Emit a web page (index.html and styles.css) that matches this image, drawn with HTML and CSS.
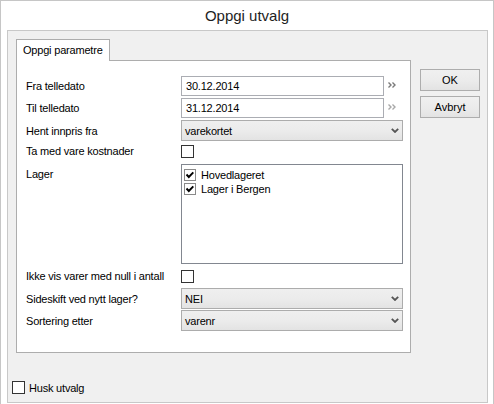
FILE: index.html
```html
<!DOCTYPE html>
<html lang="no">
<head>
<meta charset="utf-8">
<title>Oppgi utvalg</title>
<link rel="stylesheet" href="styles.css">
</head>
<body>
<div class="window">
  <div class="titlebar">Oppgi utvalg</div>
  <div class="panel">
    <div class="main">
      <div class="left">
        <div class="tabs"><div class="tab">Oppgi parametre</div></div>
        <div class="tabpanel">
          <div class="row r1">
            <div class="label">Fra telledato</div>
            <div class="date">30.12.2014</div>
            <svg class="more dark" width="9" height="6" viewBox="0 0 9 6"><path d="M0.5 0.5 L3 3 L0.5 5.5 M4.5 0.5 L7 3 L4.5 5.5" fill="none" stroke="currentColor" stroke-width="1.4"/></svg>
          </div>
          <div class="row r2">
            <div class="label">Til telledato</div>
            <div class="date">31.12.2014</div>
            <svg class="more light" width="9" height="6" viewBox="0 0 9 6"><path d="M0.5 0.5 L3 3 L0.5 5.5 M4.5 0.5 L7 3 L4.5 5.5" fill="none" stroke="currentColor" stroke-width="1.4"/></svg>
          </div>
          <div class="row r3">
            <div class="label">Hent innpris fra</div>
            <div class="select"><span>varekortet</span><svg width="8" height="5" viewBox="0 0 8 5"><path d="M0.8 0.8 L4 4 L7.2 0.8" fill="none" stroke="#555" stroke-width="1.8"/></svg></div>
          </div>
          <div class="row r4">
            <div class="label">Ta med vare kostnader</div>
            <div class="cb"></div>
          </div>
          <div class="row r5">
            <div class="label top">Lager</div>
            <div class="listbox">
              <div class="item"><svg class="chk" width="12" height="12" viewBox="0 0 12 12"><rect x="0.5" y="0.5" width="11" height="11" fill="#fff" stroke="#8a8a8a"/><path d="M2.5 5.5 L4.8 8 L9.3 3.3" fill="none" stroke="#000" stroke-width="1.9"/></svg><span>Hovedlageret</span></div>
              <div class="item"><svg class="chk" width="12" height="12" viewBox="0 0 12 12"><rect x="0.5" y="0.5" width="11" height="11" fill="#fff" stroke="#8a8a8a"/><path d="M2.5 5.5 L4.8 8 L9.3 3.3" fill="none" stroke="#000" stroke-width="1.9"/></svg><span>Lager i Bergen</span></div>
            </div>
          </div>
          <div class="row r6">
            <div class="label">Ikke vis varer med null i antall</div>
            <div class="cb"></div>
          </div>
          <div class="row r7">
            <div class="label">Sideskift ved nytt lager?</div>
            <div class="select"><span>NEI</span><svg width="8" height="5" viewBox="0 0 8 5"><path d="M0.8 0.8 L4 4 L7.2 0.8" fill="none" stroke="#555" stroke-width="1.8"/></svg></div>
          </div>
          <div class="row r8">
            <div class="label">Sortering etter</div>
            <div class="select"><span>varenr</span><svg width="8" height="5" viewBox="0 0 8 5"><path d="M0.8 0.8 L4 4 L7.2 0.8" fill="none" stroke="#555" stroke-width="1.8"/></svg></div>
          </div>
        </div>
      </div>
      <div class="buttons">
        <div class="btn">OK</div>
        <div class="btn">Avbryt</div>
      </div>
    </div>
    <div class="remember">
      <div class="cb"></div>
      <span>Husk utvalg</span>
    </div>
  </div>
</div>
</body>
</html>
```

FILE: styles.css
```css
* { box-sizing: border-box; }

body {
  margin: 0;
  font-family: "Liberation Sans", Arial, sans-serif;
  font-size: 11px;
  letter-spacing: -0.2px;
  color: #000;
  background: #fff;
}

.window {
  width: 494px;
  height: 404px;
  border: 1px solid #c6c6c6;
  border-bottom: none;
  background: #fff;
  display: flex;
  flex-direction: column;
}

.titlebar {
  height: 29px;
  line-height: 29px;
  text-align: center;
  font-size: 15px;
  letter-spacing: 0;
  color: #1e1e1e;
}

.panel {
  flex: 1;
  margin: 0 5px 1px 6px;
  border: 1px solid #c8c8c8;
  background: #f0f0f0;
  padding-top: 8px;
  display: flex;
  flex-direction: column;
}

.main {
  display: flex;
  margin-left: 8px;
}

.left {
  width: 395px;
  display: flex;
  flex-direction: column;
}

.tabs {
  display: flex;
  height: 21px;
}

.tab {
  position: relative;
  z-index: 1;
  width: 94px;
  height: 22px;
  border: 1px solid #adadad;
  border-bottom: none;
  background: #fff;
  padding-left: 6px;
  line-height: 20px;
  white-space: nowrap;
}

.tabpanel {
  height: 293px;
  border: 1px solid #adadad;
  background: #fff;
  padding: 15px 0 0 9px;
}

.row {
  display: flex;
  align-items: center;
}

.r1 { height: 20px; }
.r2 { height: 20px; margin-top: 2px; }
.r3 { height: 21px; margin-top: 2px; }
.r4 { height: 14px; margin-top: 3px; }
.r5 { height: 100px; margin-top: 6px; align-items: flex-start; }
.r6 { height: 14px; margin-top: 5px; }
.r7 { height: 21px; margin-top: 5px; }
.r8 { height: 21px; margin-top: 1px; }

.label {
  width: 155px;
  flex: none;
  white-space: nowrap;
  line-height: 14px;
}

.label.top {
  padding-top: 3px;
}

.date {
  width: 203px;
  height: 20px;
  border: 1px solid #abadb3;
  background: #fff;
  padding-left: 4px;
  line-height: 18px;
}

.more {
  margin-left: 4px;
  margin-top: -2px;
}
.more.dark { color: #7a7a7a; }
.more.light { color: #a8a8a8; }

.select {
  width: 222px;
  height: 21px;
  border: 1px solid #acacac;
  background: linear-gradient(#efefef 0%, #ebebeb 55%, #e3e3e3 100%);
  padding: 0 3px 0 3px;
  display: flex;
  align-items: center;
  justify-content: space-between;
}

.cb {
  width: 13px;
  height: 13px;
  border: 1px solid #333;
  background: #fff;
  flex: none;
}

.listbox {
  width: 222px;
  height: 100px;
  border: 1px solid #828790;
  background: #fff;
  padding: 3px 0 0 2px;
}

.item {
  height: 14px;
  display: flex;
  align-items: center;
  gap: 5px;
}

.chk { flex: none; }

.buttons {
  margin-left: 9px;
  padding-top: 30px;
  display: flex;
  flex-direction: column;
  gap: 5px;
}

.btn {
  width: 60px;
  height: 22px;
  border: 1px solid #adadad;
  background: linear-gradient(#f0f0f0 0%, #ebebeb 55%, #e3e3e3 100%);
  text-align: center;
  line-height: 20px;
  letter-spacing: 0;
}

.remember {
  margin-top: 28px;
  padding-left: 4px;
  display: flex;
  align-items: center;
  gap: 4px;
  height: 13px;
}
```
